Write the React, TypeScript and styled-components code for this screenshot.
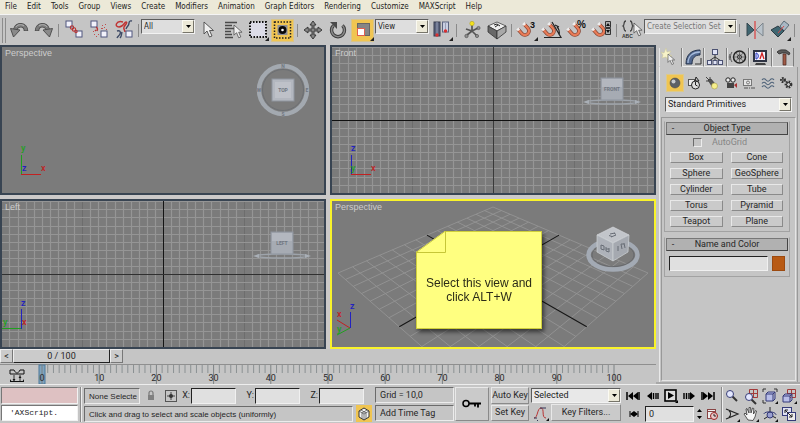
import React from "react";
import styled, { createGlobalStyle, css } from "styled-components";

const sunken = css`
  border: 1px solid;
  border-color: #6b6b6b #ececec #ececec #6b6b6b;
`;
const raised = css`
  border: 1px solid;
  border-color: #eeeeee #777777 #777777 #eeeeee;
`;

const GlobalStyle = createGlobalStyle`
  * { box-sizing: border-box; }
  body { margin: 0; background: #c5c5c5; }
  body, button, input, select {
    font-family: Roboto, "Liberation Sans", sans-serif;
    font-size: 9px;
    line-height: 11px;
    color: #262626;
  }
  button { padding: 0; margin: 0; white-space: nowrap; }
  svg { display: block; flex: none; }
`;

/* ---------- shell ---------- */

const Page = styled.div`
  display: flex;
  flex-direction: column;
  min-height: 100vh;
  overflow: hidden;
`;

const MenuBar = styled.nav`
  display: flex;
  gap: 10px;
  height: 14px;
  padding: 0 5px;
  background: #ece9d8;
`;

const MenuLink = styled.a`
  font-family: "DejaVu Sans Condensed", "DejaVu Sans", sans-serif;
  font-size: 8px;
  line-height: 13px;
  color: #1c1c1c;
  text-decoration: none;
  white-space: nowrap;
`;

const Toolbar = styled.div`
  display: flex;
  align-items: center;
  height: 31px;
  background: #c5c5c5;
  border-top: 1px solid #f4f4f4;
`;

const Handle = styled.span`
  width: 4px;
  height: 25px;
  margin: 0 0 0 2px;
  border-left: 1px solid #8c8c8c;
  border-right: 1px solid #8c8c8c;
`;

const ToolSep = styled.span`
  flex: none;
  width: 1px;
  height: 13px;
  margin: 0 2px;
  background: #8a8a8a;
`;

const ToolButton = styled.button<{ $active?: boolean }>`
  display: flex;
  align-items: center;
  justify-content: center;
  flex: none;
  width: 23px;
  height: 23px;
  margin: 0 1px;
  border: 1px solid ${(p) => (p.$active ? "#d8c48a" : "transparent")};
  background: ${(p) => (p.$active ? "#f0c552" : "transparent")};
`;

const SelectBox = styled.span<{ $w?: number; $dark?: boolean }>`
  position: relative;
  display: flex;
  flex: none;
  width: ${(p) => (p.$w ? `${p.$w}px` : "auto")};
  height: 15px;
  background: ${(p) => (p.$dark ? "#dedede" : "#e8e8e8")};
  border: 1px solid;
  border-color: #5c5c5c #f2f2f2 #f2f2f2 #5c5c5c;
`;

const ToolSelectSlot = styled.span`
  align-self: flex-start;
  margin-top: 4px;
`;

const NativeSelect = styled.select<{ $muted?: boolean; $small?: boolean }>`
  appearance: none;
  flex: 1;
  min-width: 0;
  padding: 0 12px 0 2px;
  margin: 0;
  border: 0;
  border-radius: 0;
  background: transparent;
  color: ${(p) => (p.$muted ? "#767676" : "#1c1c1c")};
  ${(p) =>
    p.$small &&
    css`
      font-family: "DejaVu Sans Condensed", "DejaVu Sans", sans-serif;
      font-size: 8px;
    `}
`;

const SelectArrow = styled.span`
  position: absolute;
  top: 0;
  right: 0;
  bottom: 0;
  display: flex;
  align-items: center;
  justify-content: center;
  width: 12px;
  background: #ece9d8;
  border: 1px solid;
  border-color: #fbfaf2 #77756a #77756a #fbfaf2;
  pointer-events: none;
`;

function Dropdown(props: { label: string; value: string; width?: number; muted?: boolean; small?: boolean }) {
  return (
    <SelectBox $w={props.width} $dark={props.small}>
      <NativeSelect aria-label={props.label} $muted={props.muted} $small={props.small} defaultValue={props.value}>
        <option>{props.value}</option>
      </NativeSelect>
      <SelectArrow>
        <svg width="5" height="3" viewBox="0 0 5 3">
          <path d="M0 0h5L2.5 3z" fill="#000" />
        </svg>
      </SelectArrow>
    </SelectBox>
  );
}

/* ---------- toolbar icons (22 x 22) ---------- */

const IconSvg = styled.svg`
  overflow: visible;
`;

const Icon = ({ children, w = 22, h = 22 }: { children: React.ReactNode; w?: number; h?: number }) => (
  <IconSvg width={w} height={h} viewBox={`0 0 ${w} ${h}`} aria-hidden="true">
    {children}
  </IconSvg>
);

const Flyout = () => <path d="M22 18v4h-4z" fill="#222" />;

const node = (x: number, y: number) => (
  <rect x={x} y={y} width="6" height="6" fill="#f2f2fb" stroke="#50577f" strokeWidth="1" />
);

const UndoArrow = () => (
  <g>
    <path d="M18 12C18 5 9 4 7 11" fill="none" stroke="#474747" strokeWidth="4.500" />
    <path d="M18 11.500C18 5 9 4 7 11" fill="none" stroke="#7c7c7c" strokeWidth="3" />
    <path d="M16 7C13 4.500 9 6 8 8" fill="none" stroke="#b5b5b5" strokeWidth="1" />
    <path d="M2.500 9.500l9.500 1.500-6.500 7z" fill="#8a8a8a" stroke="#474747" strokeWidth="0.900" />
  </g>
);
const Undo = () => <Icon><UndoArrow /></Icon>;
const Redo = () => <Icon><g transform="translate(22 0) scale(-1 1)"><UndoArrow /></g></Icon>;
const Link = () => (
  <Icon>
    {node(3, 2)}
    {node(13, 12)}
    <g fill="none" stroke="#b83434" strokeWidth="1.100">
      <circle cx="9" cy="8.500" r="1.700" /><circle cx="11" cy="10.500" r="1.700" /><circle cx="13" cy="12.500" r="1.200" />
    </g>
  </Icon>
);
const Unlink = () => (
  <Icon>
    {node(3, 2)}
    {node(13, 12)}
    <path d="M8 8c2 1 2 2 1 4M7 11l1 1" fill="none" stroke="#b83434" strokeWidth="1.300" />
    <g fill="#c05050">
      <path d="M14 6h1v1h-1zM17 5h1v1h-1zM13 9h2v1h-2zM16 8h1v1h-1zM6 15h1v1H6zM8 17h1v1H8zM18 10h1v1h-1zM5 12h1v1H5zM10 15h1v1h-1z" />
    </g>
  </Icon>
);
const Bind = () => (
  <Icon>
    <path d="M4 12c3-1 4 1 3 3s-2 2-3 4M13 10c1-3 3-3 3-6s3-2 3-2M9 13c-1 3 0 4-2 6" fill="none" stroke="#3e4a66" strokeWidth="1.400" />
    <path d="M10 3C3 1 1 8 6 8s5-5 7-5-1 3-2 5 1 3 1 5" fill="none" stroke="#c03434" strokeWidth="1.500" />
    {node(13, 12)}
  </Icon>
);
const ArrowShape = () => (
  <path d="M0 0v12l3-3 2.500 6 2.500-1-2.500-5.500h4z" fill="#f0f0f0" stroke="#4a4a4a" strokeWidth="0.900" />
);
const SelectArrowIcon = () => <Icon><g transform="translate(7 3)"><ArrowShape /></g></Icon>;
const SelectName = () => (
  <Icon>
    <path d="M3 3.500h12M3 6.500h7M3 9.500h9M3 12.500h6M3 15.500h7M3 18.500h8" stroke="#4a4a4a" strokeWidth="1.300" />
    <g transform="translate(12 6) scale(0.850)"><ArrowShape /></g>
  </Icon>
);
const SelectRegion = () => (
  <Icon>
    <rect x="3" y="3" width="16" height="15" fill="#dcdce8" stroke="#111" strokeWidth="2" strokeDasharray="1.500 1.500" />
    <Flyout />
  </Icon>
);
const WindowCrossing = () => (
  <Icon>
    <rect x="2.500" y="3" width="16" height="16" fill="none" stroke="#222" strokeWidth="1.500" strokeDasharray="1.500 1.500" />
    <rect x="5.500" y="6" width="10" height="10" fill="#8c8f98" />
    <circle cx="10.500" cy="11" r="4" fill="#080808" />
    <circle cx="10.500" cy="11" r="1.300" fill="#fff" />
  </Icon>
);
const Move = () => (
  <Icon>
    <path d="M11 2l3 4h-2v4h4V8l4 3-4 3v-2h-4v4h2l-3 4-3-4h2v-4H6v2l-4-3 4-3v2h4V6H8z" fill="#858585" stroke="#303030" strokeWidth="0.900" />
  </Icon>
);
const Rotate = () => (
  <Icon>
    <path d="M6.500 6.500A6.500 6.500 0 1 0 15.500 6.500" fill="none" stroke="#3a3a3a" strokeWidth="3.400" />
    <path d="M6.500 6.500A6.500 6.500 0 1 0 15.500 6.500" fill="none" stroke="#8a8a8a" strokeWidth="1.500" />
    <path d="M3 3h7v7z" fill="#4a4a4a" />
  </Icon>
);
const Scale = () => (
  <Icon>
    <rect x="5.500" y="4.500" width="12" height="12" fill="#858585" stroke="#666" />
    <rect x="5.500" y="9.500" width="7" height="7" fill="#fff" stroke="#e06050" />
    <Flyout />
  </Icon>
);
const Pivot = () => (
  <Icon>
    <rect x="3" y="3" width="6" height="14" fill="#59627c" stroke="#383e50" />
    <rect x="11.500" y="3" width="6" height="10" fill="#c9cfe2" stroke="#5b6480" />
    <path d="M6 3v12M14.500 3v8" stroke="#98a0b8" />
    <circle cx="6" cy="16" r="1.700" fill="#d83030" /><circle cx="14.500" cy="12" r="1.700" fill="#d83030" />
    <Flyout />
  </Icon>
);
const Manipulate = () => (
  <Icon>
    <path d="M11 5v7l-5 4M11 12l6-3M11 12l5 5M5 10l6 2" fill="none" stroke="#555" strokeWidth="1.700" />
    <circle cx="11" cy="4.500" r="2.200" fill="#f4e21d" stroke="#a99a20" strokeWidth="0.500" />
    <g fill="#909090" stroke="#444" strokeWidth="0.600"><circle cx="5.500" cy="17" r="1.700" /><circle cx="17.500" cy="9" r="1.600" /><circle cx="16" cy="17" r="1.600" /></g>
  </Icon>
);
const Keyboard = () => (
  <Icon>
    <path d="M2 7l9-4 9 4-9 5z" fill="#ededed" stroke="#444" strokeWidth="0.800" />
    <path d="M2 7v6l9 7v-8z" fill="#686868" stroke="#333" strokeWidth="0.800" />
    <path d="M20 7v6l-9 7v-8z" fill="#a8a8a8" stroke="#333" strokeWidth="0.800" />
    <path d="M8 6l3-1 3 2M12 6l-3 2" stroke="#222" fill="none" />
  </Icon>
);
const Magnet = () => (
  <g transform="rotate(-42 9 12)" fill="none">
    <path d="M5 6v6a4 4 0 0 0 8 0V6" stroke="#83402f" strokeWidth="3.600" />
    <path d="M5 6v6a4 4 0 0 0 8 0V6" stroke="#e87c58" strokeWidth="2.300" />
    <path d="M5 5v2.500M13 5v2.500" stroke="#eeeeee" strokeWidth="3" />
  </g>
);
const GlyphText = styled.text`
  font-family: "Liberation Sans", Arial, sans-serif;
  font-weight: 700;
`;
const Snap3 = () => <Icon><Magnet /><GlyphText x="14" y="9" fontSize="9" fill="#111">3</GlyphText><Flyout /></Icon>;
const SnapAngle = () => (
  <Icon><Magnet /><path d="M3 18.500h17L11 3M16 8c2 2 3 4 2 8M14 6l4 2" fill="none" stroke="#222" strokeWidth="1.200" /></Icon>
);
const SnapPercent = () => <Icon><Magnet /><GlyphText x="11" y="9" fontSize="10" fill="#111">%</GlyphText></Icon>;
const SnapSpinner = () => (
  <Icon><Magnet /><path d="M14.500 2.500h5v6h-5zM14.500 9.500h5v6h-5z" fill="#b0b0b0" stroke="#333" /><path d="M15 7h4l-2-3zM15 11h4l-2 3z" fill="#111" /></Icon>
);
const NamedSets = () => (
  <Icon>
    <path d="M5 2c-3 0-1 4-3 5 2 1 0 5 3 5M9 2c3 0 1 4 3 5-2 1 0 5-3 5" fill="none" stroke="#444" strokeWidth="1.300" />
    <GlyphText x="1" y="19" fontSize="5" fill="#333">ABC</GlyphText>
    <g transform="translate(13 4) scale(0.850)"><ArrowShape /></g>
  </Icon>
);
const Mirror = () => (
  <Icon>
    <path d="M3 4v13l7-6z" fill="#3f6671" stroke="#37474f" /><path d="M19 4v13l-7-6z" fill="#b9c3cb" stroke="#7c858c" />
    <path d="M11 2v18" stroke="#d84a4a" strokeWidth="1.300" />
  </Icon>
);
const Align = () => (
  <Icon>
    <path d="M11 7l4-5 5 4-5 6z" fill="#a9b8c4" stroke="#5b6b76" />
    <path d="M2 11l7-4 6 5-6 6z" fill="#3f6671" stroke="#2d3c44" /><path d="M9 14l6-7" fill="none" stroke="#d84a4a" /><Flyout />
  </Icon>
);

/* ---------- viewports ---------- */

const Body = styled.div`
  display: flex;
  flex: 1;
`;

const Workspace = styled.main`
  display: flex;
  flex-direction: column;
  flex: 1;
  min-width: 0;
`;

const ViewportGrid = styled.div`
  display: grid;
  flex: 1;
  grid-template-columns: 1fr 1fr;
  grid-template-rows: 1fr 1fr;
  gap: 4px;
  background: #cbc9c9;
`;

const Viewport = styled.section<{ $current?: boolean }>`
  position: relative;
  min-width: 0;
  min-height: 150px;
  overflow: hidden;
  background: #7b7b7b;
  border: 2px solid ${(p) => (p.$current ? "#f9f32a" : "#384452")};
`;

const ViewLabel = styled.h2`
  position: relative;
  margin: 0 3px;
  font-family: "Liberation Sans", Arial, sans-serif;
  font-weight: 400;
  font-size: 9px;
  line-height: 12px;
  color: #cdcdcd;
`;

const Backdrop = styled.svg`
  position: absolute;
  inset: 0;
  width: 100%;
  height: 100%;
`;

const Corner = styled.div<{ $top: number; $right: number }>`
  position: absolute;
  top: ${(p) => p.$top}px;
  right: ${(p) => p.$right}px;
`;

const AxisSpot = styled.div`
  position: absolute;
  left: 0;
  bottom: 16px;
`;

const NotePlace = styled.div`
  position: absolute;
  inset: 0;
  display: flex;
  align-items: center;
  justify-content: center;
  padding: 12px 28px 0 0;
`;

function OrthoGrid({ strongV }: { strongV: boolean }) {
  const minor: string[] = [];
  const major: string[] = [];
  for (let i = -22; i <= 22; i++) {
    if (i === 0) continue;
    const p = Math.round(i * 8.08) + 0.5;
    (i % 10 === 0 ? major : minor).push(`M${161 + p} 0V146M0 ${73 + p}H322`);
  }
  return (
    <Backdrop viewBox="0 0 322 146" preserveAspectRatio="xMidYMid slice" aria-hidden="true">
      <path d={major.join("")} stroke="#6d6d6d" />
      <path d={minor.join("")} stroke="#959595" strokeWidth="1.200" />
      <path d="M161.500 0V146" stroke={strongV ? "#151515" : "#3a3a3a"} />
      <path d="M0 73.500H322" stroke={strongV ? "#303030" : "#101010"} />
    </Backdrop>
  );
}

const project = (u: number, v: number) => {
  const s = u + v;
  const d = u - v;
  const w = 1 - 0.2574 * s;
  return `${(161 + (115.1 * d) / w).toFixed(2)} ${((207 - 4.26 * s) / w - 201).toFixed(2)}`;
};

function GroundGrid() {
  const n = 14;
  const paths: string[] = [];
  for (let i = 0; i <= n; i++) {
    if (i === n / 2) continue;
    const t = i / n;
    paths.push(`M${project(t, 0)}L${project(t, 1)}M${project(0, t)}L${project(1, t)}`);
  }
  return (
    <Backdrop viewBox="0 0 322 146" preserveAspectRatio="xMidYMid slice" aria-hidden="true">
      <path d={paths.join("")} fill="none" stroke="#949494" strokeWidth="0.900" />
      <path d={`M${project(0.5, 0)}L${project(0.5, 1)}M${project(0, 0.5)}L${project(1, 0.5)}`} stroke="#161616" strokeWidth="1.100" />
    </Backdrop>
  );
}

const CubeText = styled.text`
  font-family: Roboto, "Liberation Sans", sans-serif;
  font-weight: 700;
  font-size: 5px;
  fill: #6f757f;
  text-anchor: middle;
`;

const TopCube = () => (
  <Icon w={54} h={56}>
    <circle cx="27" cy="28" r="24" fill="none" stroke="#a3a9b0" strokeWidth="4.500" />
    <circle cx="27" cy="28" r="20.500" fill="none" stroke="#666a70" strokeWidth="0.700" />
    <rect x="16" y="17" width="22" height="22" fill="#b3b7bf" stroke="#90969f" />
    <rect x="19" y="20" width="16" height="16" fill="#bec1c8" />
    <CubeText x="27" y="30">TOP</CubeText>
    <CubeText x="27" y="6">N</CubeText>
    <CubeText x="51" y="30">E</CubeText>
    <CubeText x="27" y="54">S</CubeText>
    <CubeText x="3" y="30">W</CubeText>
  </Icon>
);

const SideCube = ({ text }: { text: string }) => (
  <Icon w={58} h={30}>
    <ellipse cx="29" cy="25" rx="26" ry="2" fill="none" stroke="#9ea4ab" strokeWidth="1.300" />
    <path d="M0 25l6-2v4zM58 25l-6-2v4z" fill="#a9afb6" />
    <rect x="18" y="1" width="22" height="22" fill="#a6abb3" stroke="#8e949e" />
    <rect x="19" y="2" width="20" height="8" fill="#b3b7bf" />
    <CubeText x="29" y="14">{text}</CubeText>
  </Icon>
);

const HomeCube = () => (
  <Icon w={56} h={48}>
    <ellipse cx="28" cy="29" rx="24.500" ry="14.500" fill="none" stroke="#a3aab4" strokeWidth="4.500" />
    <ellipse cx="28" cy="29" rx="21" ry="11.500" fill="none" stroke="#5d6066" strokeWidth="0.700" />
    <path d="M28 1l16 8-16 8-16-8z" fill="#c2c5ca" stroke="#d5d8dc" strokeWidth="0.700" />
    <path d="M12 9l16 8v18l-16-9z" fill="#aeb2b9" stroke="#cfd2d6" strokeWidth="0.700" />
    <path d="M44 9l-16 8v18l15-9z" fill="#a5a9b0" stroke="#cfd2d6" strokeWidth="0.700" />
    <g fill="none" stroke="#676c75">
      <path d="M25 8l5-1M26 11l5-2M24 9.500l3 1M29 7l2 1.500" />
      <path d="M16 19v4l3 1v-4zM21 21v4l3 1v-4M21 23h3" />
      <path d="M33 20v5M36 18l1 5M36 18h3M39 17l1 5" />
    </g>
  </Icon>
);

type Ax = { t: string; x: number; y: number; c: string; d?: string };
const RED = "#c22020";
const GREEN = "#1fa01f";
const BLUE = "#2222c0";

const AxisText = styled.text`
  font-family: Roboto, "Liberation Sans", sans-serif;
  font-weight: 500;
  font-size: 9px;
`;

const Axes = ({ items }: { items: Ax[] }) => (
  <AxisSpot>
    <Icon w={48} h={40}>
      {items.map((a) => (
        <g key={a.t}>
          {a.d && <path d={a.d} stroke={a.c} fill="none" />}
          <AxisText x={a.x} y={a.y} fill={a.c}>{a.t}</AxisText>
        </g>
      ))}
    </Icon>
  </AxisSpot>
);

const Note = styled.aside`
  position: relative;
  width: 126px;
  height: 98px;
  padding: 44px 6px 0;
  background: #ffff80;
  border: 1px solid #cfcf3c;
  clip-path: polygon(29px 0, 150px 0, 150px 120px, 0 120px, 0 21px);
  font-family: "Liberation Sans", Arial, sans-serif;
  font-size: 12px;
  line-height: 14px;
  text-align: center;
  color: #2b2b18;
`;

const NoteShadow = styled.div`
  filter: drop-shadow(2px 3px 2px rgba(0, 0, 0, 0.55));
`;

const Fold = styled.svg`
  position: absolute;
  top: -1px;
  left: -1px;
`;

/* ---------- timeline ---------- */

const SliderRow = styled.div`
  display: flex;
  height: 15px;
  padding-bottom: 1px;
`;

const SlideButton = styled.button<{ $thumb?: boolean }>`
  width: ${(p) => (p.$thumb ? "97px" : "13px")};
  background: #cbcbcb;
  ${raised}
  ${(p) => p.$thumb && "border-right-color:#222;border-bottom-color:#222;"}
`;

const TrackBar = styled.div`
  display: flex;
  height: 20px;
  border-top: 1px solid #8f8f8f;
`;

const CurveButton = styled.button`
  width: 42px;
  padding: 0 0 0 8px;
  border: 0;
  background: transparent;
`;

const Ruler = styled.div`
  flex: 1;
  margin-right: 42px;
`;

const RulerSvg = styled.svg`
  width: 100%;
  height: 19px;
  overflow: visible;
`;

const RulerText = styled.text`
  font-family: Roboto, "Liberation Sans", sans-serif;
  font-size: 9px;
  fill: #2b2b2b;
  text-anchor: middle;
`;

function Timeline() {
  const frames = Array.from({ length: 101 }, (_, i) => i);
  return (
    <Ruler>
      <RulerSvg aria-label="Track bar">
        <rect x="-3" y="0" width="6" height="19" fill="#7ea3bf" stroke="#4d7899" />
        {frames.map((f) => (
          <line key={f} x1={`${f}%`} x2={`${f}%`} y1="0" y2={f % 10 === 0 ? 19 : 8} stroke={f % 10 === 0 ? "#7c8284" : "#8b9193"} />
        ))}
        {frames.filter((f) => f % 10 === 0).map((f) => (
          <RulerText key={f} x={`${f}%`} y="16">{f}</RulerText>
        ))}
      </RulerSvg>
    </Ruler>
  );
}

/* ---------- command panel ---------- */

const Panel = styled.aside`
  display: flex;
  flex-direction: column;
  width: 144px;
  padding: 3px 2px 0 3px;
  border-bottom: 2px solid #a8a8a8;
  background: #c5c5c5;
`;

const TabRow = styled.div`
  display: grid;
  grid-template-columns: repeat(6, 1fr);
  height: 19px;
  padding-right: 4px;
  flex: none;
`;

const TabButton = styled.button<{ $active?: boolean }>`
  display: flex;
  align-items: center;
  justify-content: center;
  border: 0;
  border-right: 1px solid #7d7d7d;
  border-left: 1px solid #e6e6e6;
  border-bottom: 1px solid ${(p) => (p.$active ? "#c5c5c5" : "#efefef")};
  background: transparent;
`;

const PanelInner = styled.div`
  display: flex;
  flex-direction: column;
  flex: 1;
  border-left: 1px solid #e9e9e9;
  border-right: 1px solid #999;
`;

const CategoryRow = styled.div`
  display: grid;
  grid-template-columns: repeat(7, 1fr);
  align-items: center;
  padding: 7px 1px 5px 6px;
`;

const CategoryButton = styled.button<{ $active?: boolean }>`
  display: flex;
  align-items: center;
  justify-content: center;
  width: 18px;
  height: 18px;
  border: 1px solid ${(p) => (p.$active ? "#dcc98c" : "transparent")};
  background: ${(p) => (p.$active ? "#f0c552" : "transparent")};
`;

const PrimitiveRow = styled.div`
  display: grid;
  padding: 0 5px 5px;
`;

const Rollouts = styled.div`
  display: flex;
  flex-direction: column;
  gap: 5px;
  flex: 1;
  margin: 0 1px 1px;
  padding: 3px 5px 3px 2px;
  border: 1px solid #999;
  border-right-color: #e5e5e5;
  border-bottom-color: #e5e5e5;
`;

const Rollout = styled.section`
  border: 1px solid #a2a2a2;
  border-top-color: #c5c5c5;
  padding: 0 1px 4px;
`;

const RolloutHead = styled.button`
  display: grid;
  grid-template-columns: 12px 1fr 12px;
  align-items: center;
  width: 100%;
  height: 13px;
  border: 1px solid;
  border-color: #777 #444 #444 #777;
  background: #b1b1b1;
`;

const CheckLine = styled.label`
  display: flex;
  align-items: center;
  justify-content: center;
  gap: 10px;
  height: 15px;
  padding-right: 14px;
  color: #858585;
`;

const Check = styled.input`
  appearance: none;
  width: 9px;
  height: 9px;
  margin: 0;
  ${sunken}
`;

const ObjectGrid = styled.div`
  display: grid;
  grid-template-columns: 1fr 1fr;
  gap: 5px 8px;
  padding: 2px 5px 0 4px;
`;

const ObjectButton = styled.button`
  height: 11px;
  line-height: 9px;
  background: #cacaca;
  ${raised}
  border-color: #e8e8e8 #8a8a8a #8a8a8a #e8e8e8;
`;

const NameLine = styled.div`
  display: grid;
  grid-template-columns: 1fr 13px;
  gap: 4px;
  padding: 5px 3px 1px;
`;

const TextInput = styled.input`
  min-width: 0;
  width: 100%;
  height: 15px;
  padding: 0 3px;
  background: #e0e0e0;
  border: 1px solid;
  border-color: #222 #f0f0f0 #f0f0f0 #222;
  border-radius: 0;
`;

const Swatch = styled.button`
  background: #b85a14;
  border: 1px solid #9c4a10;
`;

const tabIcons: [string, React.ReactElement][] = [
  ["Create", <Icon w={18} h={18} key="a"><path d="M5 0l1 4 4-1-2 3 3 2-4 1v3L5 9 1 10l1-3-2-3 3 1z" fill="#f7f3c8" stroke="#c9c49a" strokeWidth="0.500" /><g transform="translate(7 6) scale(0.700)"><ArrowShape /></g></Icon>],
  ["Modify", <Icon w={18} h={18} key="b"><path d="M2 16C2 6 8 2 16 2v5c-5 0-8 3-8 9z" fill="#52688f" stroke="#27344c" /><path d="M4 15C4 8 9 4 16 4" fill="none" stroke="#a9bddd" strokeWidth="1.300" /><path d="M11 16h6M17 10v6" stroke="#333" fill="none" /></Icon>],
  ["Hierarchy", <Icon w={18} h={18} key="c"><path d="M9 6v3M9 9l-6 4M9 9v4M9 9l6 4" stroke="#333" /><g fill="#dfe2f4" stroke="#4c5272"><rect x="6.500" y="1.500" width="5" height="5" /><rect x="1.500" y="12.500" width="4" height="4" /><rect x="7" y="12.500" width="4" height="4" /><rect x="12.500" y="12.500" width="4" height="4" /></g></Icon>],
  ["Motion", <Icon w={18} h={18} key="d"><circle cx="10.500" cy="9" r="6" fill="#bbb" stroke="#222" strokeWidth="1.500" /><circle cx="10.500" cy="9" r="2" fill="#eee" stroke="#222" /><path d="M10.500 3v12M5 9h11M7 5l7 8M14 5l-7 8" stroke="#444" strokeWidth="0.600" /><path d="M3 4c-2 3-2 7 0 10M1 6c-1 2-1 4 0 6" fill="none" stroke="#555" /></Icon>],
  ["Display", <Icon w={18} h={18} key="e"><rect x="2" y="2" width="14" height="12" fill="#2d3242" /><rect x="4" y="4" width="10" height="8" fill="#f2f2ff" /><path d="M5 5v6c3 0 3-6 0-6" fill="none" stroke="#2233c0" /><path d="M9 11l2-6 2 6" fill="none" stroke="#d02020" strokeWidth="1.300" /><path d="M5 15h9l1 2H4z" fill="#444" /></Icon>],
  ["Utilities", <Icon w={18} h={18} key="f"><path d="M3 4c3-3 6-2 9-2l4 3-1 2-3-2H8L5 6z" fill="#5b5b5b" stroke="#222" strokeWidth="0.700" /><path d="M9 6h3v11H9z" fill="#a05a46" stroke="#4a2a22" strokeWidth="0.700" /></Icon>],
];

const categoryIcons: [string, React.ReactElement][] = [
  ["Geometry", <Icon w={14} h={14} key="a"><circle cx="7" cy="7" r="5" fill="#5d6166" stroke="#444" strokeWidth="0.500" /><circle cx="5.500" cy="5.500" r="2" fill="#c9ccd0" /></Icon>],
  ["Shapes", <Icon w={14} h={14} key="b"><rect x="1.500" y="3.500" width="6" height="6" fill="#eee" stroke="#555" /><circle cx="8.500" cy="9" r="4" fill="#ddd" stroke="#222" /><path d="M9 1l3 4H8zM8.500 6v3l2 1" stroke="#222" fill="none" /></Icon>],
  ["Lights", <Icon w={14} h={14} key="c"><path d="M1 1l3 3M5 1v3M1 5h3" stroke="#444" /><path d="M3 4l3-1 5 6-3 3z" fill="#555" stroke="#222" strokeWidth="0.500" /><circle cx="9.500" cy="10" r="3" fill="#f6ee8c" stroke="#99903a" strokeWidth="0.500" /></Icon>],
  ["Cameras", <Icon w={14} h={14} key="d"><circle cx="4" cy="4" r="2.200" fill="#eee" stroke="#222" /><circle cx="9" cy="4" r="2.200" fill="#eee" stroke="#222" /><rect x="3" y="7" width="7" height="5" fill="#444" /><path d="M10 9l3-2v5z" fill="#a33" /></Icon>],
  ["Helpers", <Icon w={14} h={14} key="e"><rect x="1.500" y="3.500" width="8" height="6" fill="#e6e6e6" stroke="#777" /><circle cx="6" cy="6.500" r="1.500" fill="none" stroke="#777" /><path d="M2 12h11" stroke="#555" strokeDasharray="4 1 1 1" /></Icon>],
  ["Space Warps", <Icon w={14} h={14} key="f"><path d="M1 4q2-2.500 4 0t4 0 4 0M1 7.500q2-2.500 4 0t4 0 4 0M1 11q2-2.500 4 0t4 0 4 0" fill="none" stroke="#4d6178" strokeWidth="1.200" /></Icon>],
  ["Systems", <Icon w={14} h={14} key="g"><g fill="none" stroke="#333"><circle cx="4" cy="4" r="2" strokeWidth="2" strokeDasharray="1.500 1" /><circle cx="9.500" cy="8.500" r="2.700" strokeWidth="2.400" strokeDasharray="1.500 1" /><circle cx="4" cy="4" r="1.200" /><circle cx="9.500" cy="8.500" r="2" /></g></Icon>],
];

const primitives = ["Box", "Cone", "Sphere", "GeoSphere", "Cylinder", "Tube", "Torus", "Pyramid", "Teapot", "Plane"];

function CommandPanel() {
  return (
    <Panel>
      <TabRow>
        {tabIcons.map(([name, icon], i) => (
          <TabButton key={name} aria-label={name} $active={i === 0}>{icon}</TabButton>
        ))}
      </TabRow>
      <PanelInner>
        <CategoryRow>
          {categoryIcons.map(([name, icon], i) => (
            <CategoryButton key={name} aria-label={name} $active={i === 0}>{icon}</CategoryButton>
          ))}
        </CategoryRow>
        <PrimitiveRow><Dropdown label="Category" value="Standard Primitives" /></PrimitiveRow>
        <Rollouts>
          <Rollout>
            <RolloutHead><span>-</span><span>Object Type</span></RolloutHead>
            <CheckLine><Check type="checkbox" disabled />AutoGrid</CheckLine>
            <ObjectGrid>
              {primitives.map((p) => <ObjectButton key={p}>{p}</ObjectButton>)}
            </ObjectGrid>
          </Rollout>
          <Rollout>
            <RolloutHead><span>-</span><span>Name and Color</span></RolloutHead>
            <NameLine><TextInput aria-label="Object name" /><Swatch aria-label="Object color" /></NameLine>
          </Rollout>
        </Rollouts>
      </PanelInner>
    </Panel>
  );
}

/* ---------- status area ---------- */

const StatusArea = styled.footer`
  display: flex;
  height: 39px;
  padding: 2px 4px 2px 1px;
  border-top: 1px solid #ededed;
  background: #c5c5c5;
`;

const Stack = styled.div<{ $w?: number; $gap?: number; $ml?: number }>`
  display: flex;
  flex-direction: column;
  flex: none;
  gap: ${(p) => p.$gap ?? 2}px;
  width: ${(p) => (p.$w ? `${p.$w}px` : "auto")};
  margin-left: ${(p) => p.$ml ?? 0}px;
`;

const ListenerField = styled.input<{ $pink?: boolean }>`
  width: 100%;
  height: 17px;
  padding: 0 8px;
  border: 1px solid;
  border-color: #777 #f2f2f2 #f2f2f2 #777;
  background: ${(p) => (p.$pink ? "#dec1c2" : "#ffffff")};
  font-family: "Liberation Mono", monospace;
  font-size: 8px;
`;

const StatusRow = styled.div`
  display: flex;
  align-items: center;
  height: 17px;
`;

const Prompt = styled.div<{ $w?: number }>`
  flex: ${(p) => (p.$w ? "none" : "1")};
  width: ${(p) => (p.$w ? `${p.$w}px` : "auto")};
  height: 16px;
  padding: 0 0 0 4px;
  line-height: 15px;
  white-space: nowrap;
  overflow: hidden;
  ${sunken}
`;

const Small = styled.span`
  font-family: "Liberation Sans", Arial, sans-serif;
  font-size: 8px;
`;

const CoordLabel = styled.label<{ $w: number }>`
  display: flex;
  align-items: center;
  justify-content: flex-end;
  gap: 1px;
  width: ${(p) => p.$w}px;
`;

const CoordInput = styled(TextInput)`
  width: 45px;
  height: 16px;
`;

const PlainButton = styled.button<{ $w?: number; $on?: boolean }>`
  display: flex;
  align-items: center;
  justify-content: center;
  flex: none;
  width: ${(p) => p.$w ?? 18}px;
  height: 17px;
  border: 0;
  background: ${(p) => (p.$on ? "#f0c552" : "transparent")};
`;

const ModeButton = styled(PlainButton)`
  margin-left: 3px;
`;

const KeyButton = styled.button<{ $h?: number; $w: number }>`
  display: flex;
  align-items: center;
  justify-content: center;
  width: ${(p) => p.$w}px;
  height: ${(p) => p.$h ?? 17}px;
  background: #cacaca;
  ${raised}
  border-color: #e8e8e8 #8a8a8a #8a8a8a #e8e8e8;
`;

const Divider = styled.span`
  flex: none;
  width: 2px;
  height: 35px;
  border-left: 1px solid #8a8a8a;
  border-right: 1px solid #eee;
`;

const FrameInput = styled(TextInput)`
  width: 49px;
  height: 16px;
`;

const Spinner = styled.span`
  display: grid;
  width: 9px;
  margin-left: 2px;
`;

const NavGrid = styled.div`
  display: grid;
  grid-template-columns: repeat(4, 18px);
  gap: 1px;
  margin-left: auto;
`;

const mag = (x: number, y: number) => (
  <g><path d={`M${x + 2} ${y + 2}l5 5`} stroke="#333" strokeWidth="2" /><circle cx={x} cy={y} r="3.500" fill="#e4e8ff" stroke="#3a3f78" /></g>
);
const navFly = <path d="M16 13v3h-3z" fill="#111" />;
const redGrid = <path d="M6.500 1.500h8v8h-8zM6.500 5.500h8M10.500 1.500v8" fill="none" stroke="#a33b3b" />;
const navIcons: [string, React.ReactElement][] = [
  ["Zoom", <Icon w={16} h={16} key="a">{mag(6, 6)}</Icon>],
  ["Zoom All", <Icon w={16} h={16} key="b">{redGrid}{mag(6, 9)}</Icon>],
  ["Zoom Extents", <Icon w={16} h={16} key="c"><path d="M1 4V1h3M12 1h3v3M1 12v3h3" fill="none" stroke="#333" /><path d="M4 6h7v7H4zM4 6l2-2h7l-2 2M13 4v7l-2 2" fill="#b8bee8" stroke="#343a78" />{navFly}</Icon>],
  ["Zoom Extents All", <Icon w={16} h={16} key="d">{redGrid}<path d="M2 8h7v6H2zM2 8l2-2h7l-2 2M11 6v6l-2 2" fill="#b8bee8" stroke="#343a78" />{navFly}</Icon>],
  ["Field of View", <Icon w={16} h={16} key="e"><path d="M2 3l12 5-12 5M5 4.500c2 2 2 5 0 7" fill="none" stroke="#222" strokeWidth="1.200" />{navFly}</Icon>],
  ["Pan", <Icon w={16} h={16} key="f"><path d="M5 14l-4-6 1-1 2 2L3 3l1-.5L6 7V1.500h1.500L8 7l1.500-5 1.300.5L10.500 8l2-3.500 1 .5-1.500 6-2 3.500z" fill="#f6f6f6" stroke="#333" strokeWidth="0.800" />{navFly}</Icon>],
  ["Arc Rotate", <Icon w={16} h={16} key="g"><path d="M8 9V1M8 9l6 3M8 9l-6 4" stroke="#222" /><circle cx="8" cy="9" r="3" fill="#9aa0d0" stroke="#343a78" /><path d="M2 8c0-3 12-3 12 1" fill="none" stroke="#343a78" />{navFly}</Icon>],
  ["Maximize Viewport", <Icon w={16} h={16} key="h"><rect x="1.500" y="1.500" width="9" height="8" fill="#dfe1f2" stroke="#343a78" /><rect x="6.500" y="6.500" width="8" height="8" fill="#eee" stroke="#343a78" /><path d="M4 4l7 7M4 7V4h3M11 8v3H8" fill="none" stroke="#222" /></Icon>],
];

const playIcons: [string, number, React.ReactElement][] = [
  ["Go to Start", 20, <Icon w={14} h={10} key="a"><path d="M1 1v8M13 1v8" stroke="#000" strokeWidth="1.500" /><path d="M7 1v8L2 5zM12 1v8L7 5z" /></Icon>],
  ["Previous Frame", 19, <Icon w={12} h={10} key="b"><path d="M5 1v8L0 5z" /><path d="M6.500 2v6M9 2v6M11 2v6" stroke="#000" strokeWidth="1.400" /></Icon>],
  ["Play", 18, <Icon w={14} h={14} key="c"><rect x="1" y="1" width="11" height="11" fill="#ddd" stroke="#000" strokeWidth="1.600" /><path d="M4 3v7l6-3.500z" /><path d="M14 11v3h-3z" /></Icon>],
  ["Next Frame", 18, <Icon w={12} h={10} key="d"><path d="M7 1v8l5-4z" /><path d="M1 2v6M3.500 2v6M6 2v6" stroke="#000" strokeWidth="1.400" /></Icon>],
  ["Go to End", 20, <Icon w={14} h={10} key="e"><path d="M1 1v8M13 1v8" stroke="#000" strokeWidth="1.500" /><path d="M2 1v8l5-4zM7 1v8l5-4z" /></Icon>],
];

function Status() {
  return (
    <StatusArea>
      <Stack $w={77} $gap={1}>
        <ListenerField $pink aria-label="Macro recorder" />
        <ListenerField aria-label="MAXScript listener" defaultValue="'AXScript." />
      </Stack>
      <Stack $ml={2}><Divider /></Stack>
      <Stack $w={288} $ml={2} $gap={1}>
        <StatusRow>
          <Prompt $w={56}><Small>None Selecte</Small></Prompt>
          <PlainButton $w={22} aria-label="Selection lock">
            <Icon w={8} h={12}><path d="M2 5V3a2 2 0 0 1 4 0v2" fill="none" stroke="#777" strokeWidth="1.200" /><rect x="1" y="5" width="6" height="5" fill="#808080" /></Icon>
          </PlainButton>
          <PlainButton $w={18} aria-label="Absolute mode">
            <Icon w={14} h={14}><rect x="1.500" y="1.500" width="11" height="11" fill="none" stroke="#555" /><path d="M7 3v8M3 7h8" stroke="#444" /><circle cx="7" cy="7" r="2" fill="#333" /></Icon>
          </PlainButton>
          <CoordLabel $w={56}>X:<CoordInput /></CoordLabel>
          <CoordLabel $w={64}>Y:<CoordInput /></CoordLabel>
          <CoordLabel $w={64}>Z:<CoordInput /></CoordLabel>
        </StatusRow>
        <StatusRow>
          <Prompt><Small>Click and drag to select and scale objects (uniformly)</Small></Prompt>
          <ModeButton $w={16} $on aria-label="Adaptive degradation">
            <Icon w={14} h={14}><path d="M7 1l5 3v6l-5 3-5-3V4z" fill="#f4f4f4" stroke="#333" /><path d="M2 4l5 3 5-3M7 7v6M4 3l5 3v6M10 3L5 6v6" fill="none" stroke="#555" strokeWidth="0.800" /></Icon>
          </ModeButton>
        </StatusRow>
      </Stack>
      <Stack $w={79} $ml={3} $gap={1}>
        <StatusRow><Prompt>Grid = 10,0</Prompt></StatusRow>
        <StatusRow><Prompt>Add Time Tag</Prompt></StatusRow>
      </Stack>
      <Stack $ml={1}>
        <KeyButton $w={34} $h={35} aria-label="Set keys">
          <Icon w={20} h={10}><circle cx="4" cy="4.500" r="3" fill="none" stroke="#000" strokeWidth="1.500" /><path d="M7 4.500h12M16 4.500v4M13 4.500v3" stroke="#000" strokeWidth="1.800" /></Icon>
        </KeyButton>
      </Stack>
      <Stack $ml={2} $gap={1}>
        <KeyButton $w={38}>Auto Key</KeyButton>
        <KeyButton $w={38}>Set Key</KeyButton>
      </Stack>
      <Stack $w={90} $ml={2} $gap={1}>
        <StatusRow><Dropdown label="Key selection" value="Selected" width={90} /></StatusRow>
        <StatusRow>
          <PlainButton $w={20} aria-label="Default tangents">
            <Icon w={18} h={16}><path d="M2 13c4 0 3-10 7-10s0 10 5 10" fill="none" stroke="#b83434" /><path d="M2 13h3M8 3h6M5 15l1 1" stroke="#335" /><path d="M17 13v3h-3z" fill="#111" /></Icon>
          </PlainButton>
          <KeyButton $w={70}>Key Filters...</KeyButton>
        </StatusRow>
      </Stack>
      <Stack $w={97} $ml={2} $gap={1}>
        <StatusRow>
          {playIcons.map(([name, w, icon]) => (
            <PlainButton key={name} $w={w} aria-label={name}>{icon}</PlainButton>
          ))}
        </StatusRow>
        <StatusRow>
          <PlainButton $w={22} aria-label="Key mode">
            <Icon w={10} h={8}><path d="M1 1v6M9 1v6" stroke="#000" /><path d="M5 1v6L1 4zM5 1v6l4-3z" /></Icon>
          </PlainButton>
          <FrameInput aria-label="Current frame" defaultValue="0" />
          <Spinner>
            <Icon w={7} h={12}><path d="M1 4h5L3.500 1zM1 8h5l-2.500 3z" /></Icon>
          </Spinner>
          <PlainButton $w={15} aria-label="Time configuration">
            <Icon w={13} h={14}><rect x="1.500" y="2.500" width="8" height="9" fill="#eee" stroke="#844" /><path d="M1 4.500h9" stroke="#844" /><circle cx="8" cy="9" r="3.500" fill="#e8c8c8" stroke="#922" /><path d="M8 7v2h2" stroke="#222" fill="none" /></Icon>
          </PlainButton>
        </StatusRow>
      </Stack>
      <Stack $ml={1}><Divider /></Stack>
      <NavGrid>
        {navIcons.map(([name, icon]) => <PlainButton key={name} aria-label={name}>{icon}</PlainButton>)}
      </NavGrid>
    </StatusArea>
  );
}

/* ---------- page ---------- */

const menus = ["File", "Edit", "Tools", "Group", "Views", "Create", "Modifiers", "Animation", "Graph Editors", "Rendering", "Customize", "MAXScript", "Help"];

const Tool = ({ name, icon, active }: { name: string; icon: React.ReactElement; active?: boolean }) => (
  <ToolButton aria-label={name} $active={active}>{icon}</ToolButton>
);

export default function App() {
  return (
    <Page>
      <GlobalStyle />
      <MenuBar>{menus.map((m) => <MenuLink key={m} href="#">{m}</MenuLink>)}</MenuBar>
      <Toolbar>
        <Handle />
        <Tool name="Undo" icon={<Undo />} />
        <Tool name="Redo" icon={<Redo />} />
        <ToolSep />
        <Tool name="Link" icon={<Link />} />
        <Tool name="Unlink" icon={<Unlink />} />
        <Tool name="Bind to Space Warp" icon={<Bind />} />
        <ToolSep />
        <ToolSelectSlot><Dropdown label="Selection filter" value="All" width={54} small /></ToolSelectSlot>
        <Tool name="Select" icon={<SelectArrowIcon />} />
        <Tool name="Select by Name" icon={<SelectName />} />
        <Tool name="Selection Region" icon={<SelectRegion />} />
        <Tool name="Window Crossing" icon={<WindowCrossing />} active />
        <ToolSep />
        <Tool name="Move" icon={<Move />} />
        <Tool name="Rotate" icon={<Rotate />} />
        <Tool name="Scale" icon={<Scale />} active />
        <ToolSelectSlot><Dropdown label="Coordinate system" value="View" width={54} small /></ToolSelectSlot>
        <Tool name="Pivot Center" icon={<Pivot />} />
        <ToolSep />
        <Tool name="Manipulate" icon={<Manipulate />} />
        <Tool name="Keyboard Override" icon={<Keyboard />} />
        <ToolSep />
        <Tool name="Snaps" icon={<Snap3 />} />
        <Tool name="Angle Snap" icon={<SnapAngle />} />
        <Tool name="Percent Snap" icon={<SnapPercent />} />
        <Tool name="Spinner Snap" icon={<SnapSpinner />} />
        <ToolSep />
        <Tool name="Named Selection Sets" icon={<NamedSets />} />
        <ToolSelectSlot><Dropdown label="Named selection" value="Create Selection Set" width={93} muted small /></ToolSelectSlot>
        <ToolSep />
        <Tool name="Mirror" icon={<Mirror />} />
        <Tool name="Align" icon={<Align />} />
        <ToolSep />
      </Toolbar>
      <Body>
        <Workspace>
          <ViewportGrid>
            <Viewport>
              <ViewLabel>Perspective</ViewLabel>
              <Corner $top={15} $right={14}><TopCube /></Corner>
              <Axes items={[
                { t: "y", x: 19, y: 14, c: GREEN, d: "M19.500 18V38" },
                { t: "x", x: 39, y: 34, c: RED, d: "M19 37.500H39" },
                { t: "z", x: 20, y: 34, c: BLUE },
              ]} />
            </Viewport>
            <Viewport>
              <OrthoGrid strongV={false} />
              <ViewLabel>Front</ViewLabel>
              <Corner $top={30} $right={13}><SideCube text="FRONT" /></Corner>
              <Axes items={[
                { t: "z", x: 19, y: 14, c: BLUE, d: "M19.500 18V38" },
                { t: "x", x: 39, y: 34, c: RED, d: "M19 37.500H39" },
                { t: "y", x: 19, y: 34, c: GREEN },
              ]} />
            </Viewport>
            <Viewport>
              <OrthoGrid strongV />
              <ViewLabel>Left</ViewLabel>
              <Corner $top={30} $right={13}><SideCube text="LEFT" /></Corner>
              <Axes items={[
                { t: "z", x: 19, y: 15, c: BLUE, d: "M19.500 18V38" },
                { t: "y", x: 1, y: 34, c: GREEN, d: "M0 37.500H19" },
                { t: "x", x: 20, y: 34, c: RED },
              ]} />
            </Viewport>
            <Viewport $current>
              <GroundGrid />
              <ViewLabel>Perspective</ViewLabel>
              <Corner $top={25} $right={13}><HomeCube /></Corner>
              <Axes items={[
                { t: "z", x: 18, y: 18, c: BLUE, d: "M18.500 21V37" },
                { t: "x", x: 5, y: 26, c: RED, d: "M18 37L5 29" },
                { t: "y", x: 5, y: 41, c: GREEN, d: "M18 37L5 44" },
              ]} />
              <NotePlace>
                <NoteShadow>
                  <Note>
                    <Fold width="30" height="22" viewBox="0 0 30 22" aria-hidden="true">
                      <path d="M29.500 0V21.500H0z" fill="#ffff80" stroke="#c6c638" />
                    </Fold>
                    Select this view and click ALT+W
                  </Note>
                </NoteShadow>
              </NotePlace>
            </Viewport>
          </ViewportGrid>
          <SliderRow>
            <SlideButton aria-label="Previous frame">&lt;</SlideButton>
            <SlideButton $thumb>0 / 100</SlideButton>
            <SlideButton aria-label="Next frame">&gt;</SlideButton>
          </SliderRow>
          <TrackBar>
            <CurveButton aria-label="Mini curve editor">
              <Icon w={18} h={16}>
                <path d="M2 3h4c2 4 4 4 6 0h4M2 3v4M16 3v4M2 7h14M2 14.500h14" fill="none" stroke="#111" />
                <path d="M6 8v6M12 14V8" stroke="#333" /><path d="M4.500 12h3L6 14zM10.500 11h3L12 9zM2 12v3h2M16 12v3h-2" fill="#111" />
              </Icon>
            </CurveButton>
            <Timeline />
          </TrackBar>
        </Workspace>
        <CommandPanel />
      </Body>
      <Status />
    </Page>
  );
}
